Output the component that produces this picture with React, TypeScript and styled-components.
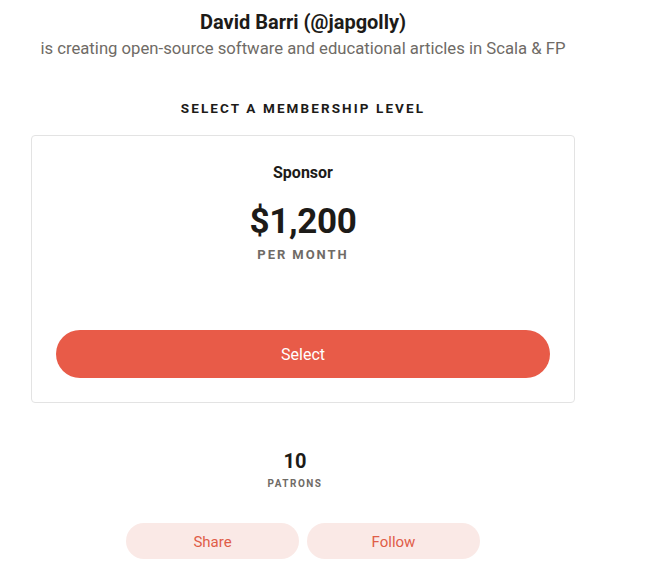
import styled, { createGlobalStyle } from 'styled-components';

const FONT = `"Roboto", "Liberation Sans", sans-serif`

const GlobalStyle = createGlobalStyle`
  html, body {
    margin: 0;
    padding: 0;
    background: #fff;
  }
  body {
    font-family: ${FONT};
    color: #1d1b18;
  }
`

const Page = styled.div`
  width: 606px;
  display: flex;
  flex-direction: column;
  align-items: center;
  padding-top: 9px;
`

const Title = styled.h1`
  margin: 0;
  font-size: 20px;
  font-weight: 700;
  line-height: 26px;
  color: #1d1b18;
`

const Tagline = styled.p`
  margin: 3px 0 0;
  font-size: 16.7px;
  line-height: 22px;
  color: #6f6b66;
`

const SectionHeading = styled.h2`
  margin: 39px 0 0;
  font-size: 13.5px;
  font-weight: 700;
  letter-spacing: 2.1px;
  line-height: 18px;
  color: #1d1b18;
`

const Card = styled.div`
  box-sizing: border-box;
  width: 544px;
  height: 268px;
  margin-top: 18px;
  border: 1px solid #e3e3e3;
  border-radius: 4px;
  display: flex;
  flex-direction: column;
  align-items: center;
  padding: 26px 24px 24px;
`

const TierName = styled.div`
  font-size: 16px;
  font-weight: 700;
  line-height: 22px;
`

const Price = styled.div`
  margin-top: 18px;
  font-size: 35px;
  font-weight: 700;
  line-height: 40px;
  letter-spacing: -0.3px;
`

const Caption = styled.div<{ $size: number }>`
  font-size: ${p => p.$size}px;
  font-weight: 700;
  letter-spacing: ${p => p.$size * 0.15}px;
  color: #6f6b66;
  text-transform: uppercase;
`

const PerMonth = styled(Caption)`
  margin-top: 5px;
  line-height: 16px;
`

const SelectButton = styled.button`
  margin-top: auto;
  width: 100%;
  height: 48px;
  border: none;
  border-radius: 24px;
  background: #e85b48;
  color: #fff;
  font-family: ${FONT};
  font-size: 16px;
  cursor: pointer;
`

const Stats = styled.div`
  margin-top: 46px;
  margin-right: 16px;
  display: flex;
  flex-direction: column;
  align-items: center;
`

const StatValue = styled.div`
  font-size: 20px;
  font-weight: 700;
  line-height: 24px;
`

const PatronsLabel = styled(Caption)`
  margin-top: 5px;
  line-height: 12px;
`

const Actions = styled.div`
  margin-top: 33px;
  display: flex;
  gap: 8px;
`

const ActionButton = styled.button`
  width: 173px;
  height: 36px;
  padding-top: 2px;
  border: none;
  border-radius: 18px;
  background: #fae9e6;
  color: #e05d48;
  font-family: ${FONT};
  font-size: 15px;
  cursor: pointer;
`

const App = () => {
  return (
    <>
      <GlobalStyle />
      <Page>
        <Title>David Barri (@japgolly)</Title>
        <Tagline>is creating open-source software and educational articles in Scala &amp; FP</Tagline>
        <SectionHeading>SELECT A MEMBERSHIP LEVEL</SectionHeading>
        <Card>
          <TierName>Sponsor</TierName>
          <Price>$1,200</Price>
          <PerMonth $size={13}>Per month</PerMonth>
          <SelectButton>Select</SelectButton>
        </Card>
        <Stats>
          <StatValue>10</StatValue>
          <PatronsLabel $size={10}>Patrons</PatronsLabel>
        </Stats>
        <Actions>
          <ActionButton>Share</ActionButton>
          <ActionButton>Follow</ActionButton>
        </Actions>
      </Page>
    </>
  )
}

export default App;
